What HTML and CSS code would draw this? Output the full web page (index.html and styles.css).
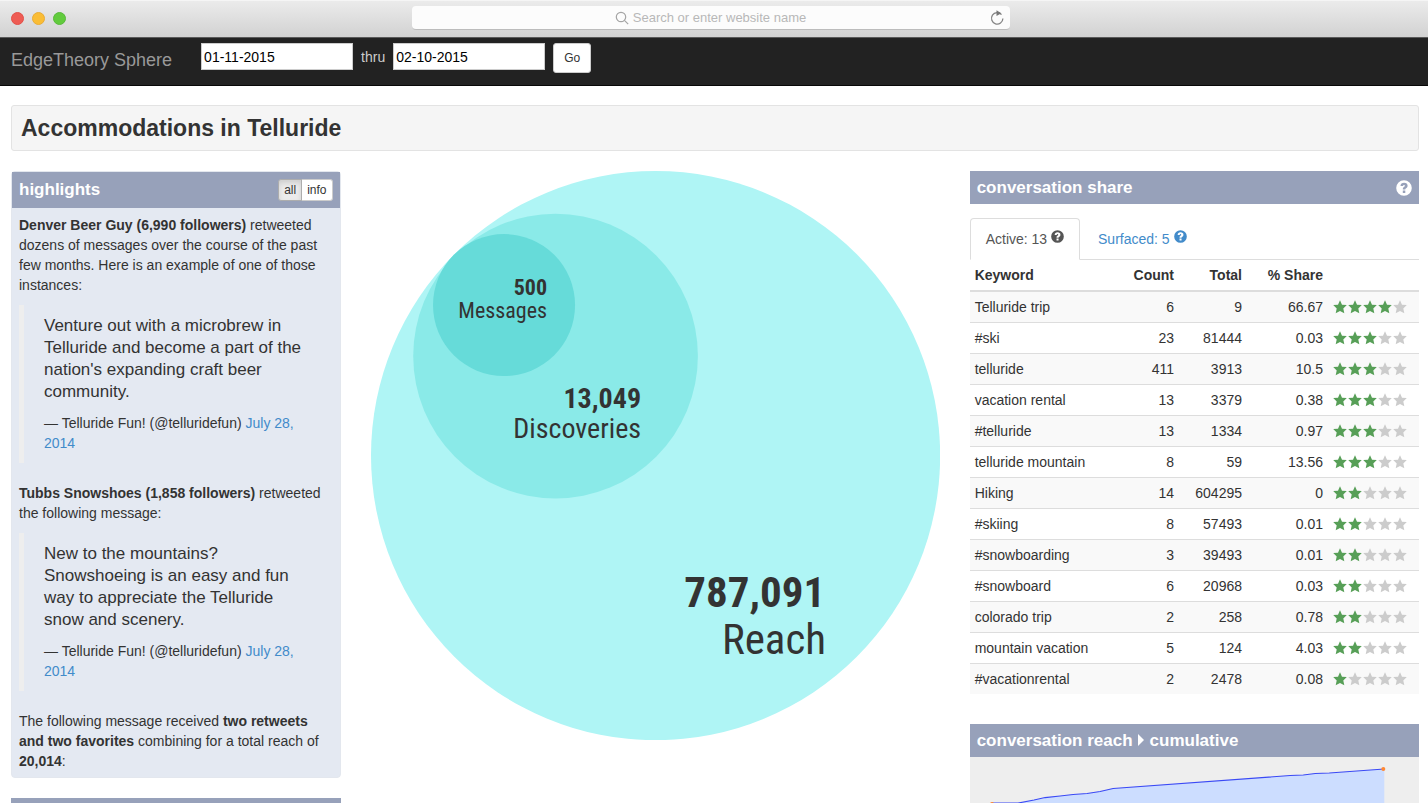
FILE: index.html
```html
<!DOCTYPE html>
<html lang="en">
<head>
<meta charset="utf-8">
<title>EdgeTheory Sphere</title>
<link rel="stylesheet" href="styles.css">
</head>
<body>
<svg class="defs" aria-hidden="true">
  <symbol id="star" viewBox="0 0 14 14"><path d="M7 .2 9 4.700 13.800 5.100 10.300 8.400 11.300 13.300 7 10.900 2.700 13.300 3.700 8.400 .2 5.100 5 4.700Z"/></symbol>
  <symbol id="help" viewBox="0 0 16 16"><path fill-rule="evenodd" d="M8 .2a7.800 7.800 0 1 0 0 15.600A7.800 7.800 0 0 0 8 .2ZM4.500 6C4.600 4 5.900 2.800 8.100 2.800c2.200 0 3.500 1.100 3.500 2.900 0 1.200-.6 1.900-1.400 2.500-.7.5-.9.7-.9 1.400H6.800c0-1.500.5-2.200 1.400-2.800.5-.3.7-.600.7-1 0-.600-.3-.8-.9-.8s-.9.400-1 1ZM6.800 10.500h2.500v2.400H6.800Z"/></symbol>
</svg>
<div class="window">
  <header class="chrome">
    <div class="lights"><span class="light red"></span><span class="light amber"></span><span class="light green"></span></div>
    <div class="address">
      <span class="address-hint">
        <svg class="icon-search" viewBox="0 0 14 14" aria-hidden="true"><circle cx="6" cy="6" r="4.700"/><path d="m9.400 9.400 3.800 3.800"/></svg>
        <span>Search or enter website name</span>
      </span>
      <button class="reload" type="button" aria-label="Reload"><svg viewBox="0 0 16 16"><path class="arc" d="M12.500 4.600A5.700 5.700 0 1 0 13.900 8.500M8 3.100h1.500"/><path class="head" d="M7.500 .2 12.300 3.200 7.500 6Z"/></svg></button>
    </div>
  </header>
  <nav class="navbar">
    <a class="brand" href="#">EdgeTheory Sphere</a>
    <form class="range">
      <input class="date" type="text" value="01-11-2015" aria-label="Start date">
      <label for="end">thru</label>
      <input class="date" id="end" type="text" value="02-10-2015">
      <button class="go" type="button">Go</button>
    </form>
  </nav>
  <main class="page">
    <h1 class="title">Accommodations in Telluride</h1>
    <div class="grid">
      <div class="col-left">
        <section class="panel">
          <div class="panel-head">
            <h2>highlights</h2>
            <div class="toggle"><button class="on" type="button">all</button><button type="button">info</button></div>
          </div>
          <div class="panel-body">
            <p><b>Denver Beer Guy (6,990 followers)</b> retweeted dozens of messages over the course of the past few months. Here is an example of one of those instances:</p>
            <blockquote>
              <p class="quote">Venture out with a microbrew in Telluride and become a part of the nation's expanding craft beer community.</p>
              <p>— Telluride Fun! (@telluridefun) <a href="#">July 28, 2014</a></p>
            </blockquote>
            <p><b>Tubbs Snowshoes (1,858 followers)</b> retweeted the following message:</p>
            <blockquote>
              <p class="quote">New to the mountains? Snowshoeing is an easy and fun way to appreciate the Telluride snow and scenery.</p>
              <p>— Telluride Fun! (@telluridefun) <a href="#">July 28, 2014</a></p>
            </blockquote>
            <p>The following message received <b>two retweets and two favorites</b> combining for a total reach of <b>20,014</b>:</p>
          </div>
        </section>
        <div class="bar"></div>
      </div>
      <svg class="bubbles" viewBox="0 0 569 569" role="img" aria-label="Reach, discoveries and messages">
        <circle class="c-reach" cx="284.500" cy="284.500" r="284.500"/>
        <circle class="c-disc" cx="184.500" cy="185" r="142.300"/>
        <circle class="c-msg" cx="133" cy="134" r="71"/>
        <g class="t-small"><text class="num" x="176" y="124">500</text><text x="176" y="147">Messages</text></g>
        <g class="t-mid"><text class="num" x="270" y="237">13,049</text><text x="270" y="267">Discoveries</text></g>
        <g class="t-large"><text class="num" x="454" y="436">787,091</text><text x="455" y="483">Reach</text></g>
      </svg>
      <div class="col-right">
        <section>
          <div class="bar"><h2>conversation share</h2><svg class="help" aria-hidden="true"><use href="#help"/></svg></div>
          <div class="tabs">
            <a class="tab active" href="#">Active: 13 <svg class="help small" aria-hidden="true"><use href="#help"/></svg></a>
            <a class="tab" href="#">Surfaced: 5 <svg class="help small" aria-hidden="true"><use href="#help"/></svg></a>
          </div>
          <table>
            <thead><tr><th class="k">Keyword</th><th class="n">Count</th><th class="t">Total</th><th class="s">% Share</th><th class="r"></th></tr></thead>
            <tbody id="rows"></tbody>
          </table>
        </section>
        <section class="reach">
          <div class="bar"><h2>conversation reach<svg class="caret" viewBox="0 0 6 12" aria-hidden="true"><path d="M0 0 6 6 0 12Z"/></svg>cumulative</h2></div>
          <svg class="chart" viewBox="0 0 449 90" aria-hidden="true">
            <path class="area" d="M22 46 48 46 64 43 75 40.500 90 39 103 37.500 117 36.500 130 34.500 143 31.500 320 18.500 333 18 345 16.500 359 16 414 12V90H22Z"/>
            <path class="line" d="M22 46 48 46 64 43 75 40.500 90 39 103 37.500 117 36.500 130 34.500 143 31.500 320 18.500 333 18 345 16.500 359 16 414 12"/>
            <circle class="dot" cx="22" cy="47" r="2"/><circle class="dot" cx="413" cy="12" r="2"/>
          </svg>
        </section>
      </div>
    </div>
  </main>
</div>
<script src="script.js"></script>
</body>
</html>
```
FILE: styles.css
```css
* { box-sizing: border-box; }
body { margin: 0; background: #fff; color: #333; font: 14px/20px "Liberation Sans", Arial, sans-serif; }
h1, h2, p { margin: 0; }
a { color: #428bca; text-decoration: none; }
button, input { font-family: inherit; }
.defs { position: absolute; width: 0; height: 0; }
.window { height: 100vh; overflow: hidden; }

.chrome { display: grid; grid-template-columns: 1fr 598px 1fr; align-items: center; height: 38px; padding: 0 17px 2px 11px; background: linear-gradient(#ebebeb, #d2d2d2); border-top: 1px solid #f5f5f5; border-bottom: 1px solid #5a5a5a; }
.lights { display: flex; gap: 8px; }
.light { width: 13px; height: 13px; border-radius: 50%; border: 1px solid; }
.red { background: #ee5c54; border-color: #e25048; }
.amber { background: #fabd35; border-color: #e9ac35; }
.green { background: #62cb3d; border-color: #58b93a; }
.address { display: grid; grid-template-columns: 20px 1fr 20px; align-items: center; height: 24px; padding: 1px 1px 0 0; border-radius: 4px; background: #fcfcfc; border-bottom: 1px solid #bcbcbc; }
.address-hint { grid-column: 2; display: flex; justify-content: center; align-items: center; gap: 4px; color: #b8b8b8; font-size: 13px; }
.icon-search { width: 14px; height: 14px; fill: none; stroke: #a5a5a5; stroke-width: 1.200; }
.reload { display: block; padding: 0; border: 0; background: none; height: 16px; }
.reload svg { display: block; width: 16px; height: 16px; }
.arc { fill: none; stroke: #858585; stroke-width: 1.300; }
.head { fill: #777; }

.navbar { display: flex; align-items: flex-start; gap: 29px; height: 48px; padding: 5px 11px; background: #222; border-bottom: 1px solid #080808; }
.brand { color: #999; font-size: 18px; padding-top: 7px; }
.range { display: flex; gap: 8px; color: #ccc; }
.range label { padding-top: 4px; }
.date { width: 152px; height: 27px; padding: 1px 2px; border: 1px solid #ccc; background: #fff; color: #000; font-size: 14px; }
.go { height: 30px; padding: 0 10px; border: 1px solid #ccc; border-radius: 3px; background: #fff; color: #333; font-size: 12px; }

.page { padding: 19px 9px 0 11px; }
.title { margin-bottom: 20px; padding: 8px 9px; border: 1px solid #e3e3e3; border-radius: 3px; background: #f5f5f5; font-size: 23px; line-height: 28px; }
.grid { display: grid; grid-template-columns: repeat(12, 1fr); column-gap: 30px; align-items: start; }
.col-left { grid-column: span 3; }
.bubbles { grid-column: span 5; width: 100%; display: block; }
.col-right { grid-column: span 4; }
h2 { font-size: 17px; line-height: 20px; color: #fff; }

.panel { margin-bottom: 20px; border: 1px solid #e3e7ee; border-radius: 4px; background: #e4e9f2; }
.panel-head { display: flex; justify-content: space-between; align-items: center; height: 36px; padding: 0 7px; background: #97a1ba; }
.toggle { display: flex; }
.toggle button { height: 22px; padding: 0 5px; border: 1px solid #ccc; border-left: 0; border-radius: 0 3px 3px 0; background: #fff; color: #333; font-size: 12px; }
.toggle .on { border: 1px solid #adadad; border-radius: 3px 0 0 3px; background: #ebebeb; box-shadow: inset 0 3px 5px rgba(0, 0, 0, .12); }
.panel-body { padding: 7px 7px 6px; }
blockquote { margin: 10px 0 20px; padding: 10px 20px; border-left: 5px solid #eee; }
.quote { margin-bottom: 10px; font-size: 17px; line-height: 22px; }

.c-reach { fill: #aff5f5; }
.c-disc { fill: #8aeae8; }
.c-msg { fill: #66dbd9; }
.bubbles text { font-family: "Roboto Condensed", "Liberation Sans Narrow", Roboto, sans-serif; fill: #333; text-anchor: end; }
.num { font-weight: 700; }
.t-small { font-size: 22px; }
.t-mid { font-size: 28px; }
.t-large { font-size: 43px; }

.bar { display: flex; justify-content: space-between; align-items: center; height: 33px; padding: 0 7px; background: #97a1ba; }
.help { width: 16px; height: 16px; fill: #fff; }
.help.small { width: 13px; height: 13px; fill: currentColor; vertical-align: 1px; }
.tabs { display: flex; gap: 2px; margin-top: 14px; height: 42px; border-bottom: 1px solid #ddd; }
.tab { height: 42px; padding: 10px 15px; border: 1px solid transparent; }
.tab.active { border-color: #ddd #ddd #fff; border-radius: 4px 4px 0 0; background: #fff; color: #555; }
table { width: 100%; table-layout: fixed; border-collapse: collapse; }
th, td { padding: 5px; text-align: right; }
th { border-bottom: 2px solid #ddd; }
.k, td:first-child { text-align: left; }
.n { width: 52px; }
.t { width: 68px; }
.s { width: 81px; }
.r { width: 91px; }
tbody tr + tr td { border-top: 1px solid #ddd; }
tbody tr:nth-child(odd) { background: #f9f9f9; }
.stars { display: flex; gap: 1px; }
.stars svg { width: 14px; height: 14px; fill: #ccc; }
.stars .lit { fill: #579f57; }
.reach { margin-top: 30px; }
.caret { width: 6px; height: 12px; margin: 0 6px 0 5px; fill: #fff; }
.chart { display: block; width: 100%; background: #eee; }
.area { fill: #cdf; }
.line { fill: none; stroke: #3a49f5; stroke-width: 1.200; }
.dot { fill: #f83; }
```
FILE: script.js
```js
const rows = [
  ["Telluride trip", 6, 9, "66.67", 4],
  ["#ski", 23, 81444, "0.03", 3],
  ["telluride", 411, 3913, "10.5", 3],
  ["vacation rental", 13, 3379, "0.38", 3],
  ["#telluride", 13, 1334, "0.97", 3],
  ["telluride mountain", 8, 59, "13.56", 3],
  ["Hiking", 14, 604295, "0", 2],
  ["#skiing", 8, 57493, "0.01", 2],
  ["#snowboarding", 3, 39493, "0.01", 2],
  ["#snowboard", 6, 20968, "0.03", 2],
  ["colorado trip", 2, 258, "0.78", 2],
  ["mountain vacation", 5, 124, "4.03", 2],
  ["#vacationrental", 2, 2478, "0.08", 1]
];
document.getElementById("rows").innerHTML = rows.map(r => {
  const stars = [0, 1, 2, 3, 4].map(i => `<svg class="${i < r[4] ? "lit" : "dim"}"><use href="#star"/></svg>`).join("");
  return `<tr>${r.slice(0, 4).map(c => `<td>${c}</td>`).join("")}<td><div class="stars" role="img" aria-label="${r[4]} of 5 stars">${stars}</div></td></tr>`;
}).join("");
```
